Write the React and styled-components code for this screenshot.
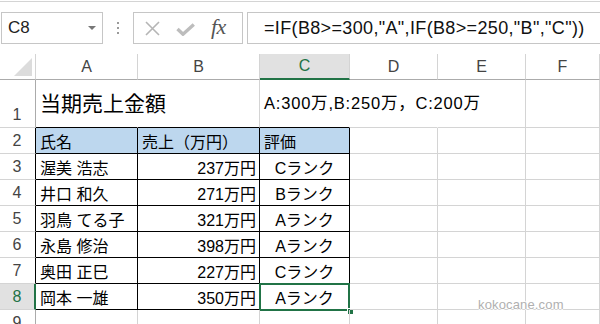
import React from 'react'
import styled, { createGlobalStyle } from 'styled-components'

const c = {
    grid: '#d4d4d4',
    head: '#ababab',
    green: '#217346',
    sel: '#e1e1e1',
    blue: '#bdd7ee',
    box: '#c6c6c6',
    label: '#444444',
}

const GlobalStyle = createGlobalStyle`
    html, body {
        margin: 0;
        padding: 0;
        background: #fff;
        overflow: hidden;
    }
    body {
        width: 600px;
        height: 324px;
        font-family: "Liberation Sans", "Noto Sans CJK JP", sans-serif;
        color: #000;
    }
`

const Page = styled.div`
    position: relative;
    width: 600px;
    height: 324px;
    overflow: hidden;
`

/* ---------- formula bar ---------- */

const FormulaBar = styled.div`
    display: flex;
    align-items: flex-start;
    box-sizing: border-box;
    height: 53px;
    margin-top: 1px;
    padding-top: 10px;
    border-top: 1px solid ${c.grid};
`

const NameBox = styled.div`
    display: flex;
    align-items: center;
    justify-content: space-between;
    box-sizing: border-box;
    width: 102px;
    height: 32px;
    margin-left: 1px;
    padding: 0 6px 0 6px;
    border: 1px solid ${c.box};
    font-size: 17px;
    color: #222;
`

const Caret = styled.span`
    width: 0;
    height: 0;
    border-left: 4px solid transparent;
    border-right: 4px solid transparent;
    border-top: 4px solid #777;
`

const Grip = styled.div`
    display: flex;
    flex-direction: column;
    align-items: center;
    justify-content: center;
    gap: 3px;
    width: 30px;
    height: 32px;

    span {
        width: 2px;
        height: 2px;
        background: #9a9a9a;
    }
`

const ButtonBox = styled.div`
    display: flex;
    align-items: center;
    gap: 16px;
    box-sizing: border-box;
    width: 110px;
    height: 32px;
    padding-left: 11px;
    border: 1px solid ${c.box};
`

const Fx = styled.span`
    font-family: "Liberation Serif", "DejaVu Serif", serif;
    font-style: italic;
    font-size: 22px;
    color: #555;
    letter-spacing: -0.5px;
    line-height: 1;
    margin-top: -2px;
`

const FormulaInput = styled.div`
    flex: 1;
    display: flex;
    align-items: center;
    box-sizing: border-box;
    height: 32px;
    margin-left: 4px;
    margin-right: -4px;
    padding-left: 16px;
    border: 1px solid ${c.box};
    font-size: 18px;
    letter-spacing: 0.35px;
    color: #111;
    white-space: nowrap;
`

/* ---------- sheet ---------- */

const Sheet = styled.div`
    display: grid;
    grid-template-columns: 36px 102px 122px 90px 88px 88px 1fr;
    grid-template-rows: 26px 48px repeat(8, 26px);
`

const Corner = styled.div`
    position: relative;
    box-sizing: border-box;
    border-right: 1px solid ${c.grid};
    border-bottom: 1px solid ${c.head};

    &::after {
        content: '';
        position: absolute;
        left: 14px;
        top: 4px;
        width: 18px;
        height: 18px;
        background: #dcdcdc;
        clip-path: polygon(100% 0, 100% 100%, 0 100%);
    }
`

const ColHead = styled.div`
    display: flex;
    align-items: center;
    justify-content: center;
    box-sizing: border-box;
    border-right: 1px solid ${c.grid};
    border-bottom: ${p => p.$active ? `2px solid ${c.green}` : `1px solid ${c.head}`};
    background: ${p => p.$active ? c.sel : '#fff'};
    color: ${p => p.$active ? c.green : c.label};
    font-size: 16px;
`

const RowHead = styled.div`
    display: flex;
    align-items: flex-end;
    justify-content: center;
    box-sizing: border-box;
    padding-right: ${p => p.$active ? 0 : 1}px;
    border-right: ${p => p.$active ? `2px solid ${c.green}` : `1px solid ${p.$edge || c.head}`};
    border-bottom: 1px solid ${c.grid};
    background: ${p => p.$active ? c.sel : '#fff'};
    color: ${p => p.$active ? c.green : c.label};
    font-size: 16px;
    line-height: 25px;
`

const Cell = styled.div`
    position: relative;
    display: flex;
    align-items: center;
    justify-content: ${p => p.$align === 'right' ? 'flex-end' : p.$align === 'center' ? 'center' : 'flex-start'};
    box-sizing: border-box;
    padding: 0 ${p => p.$align === 'right' ? 3 : 4}px 0 4px;
    border-right: 1px solid ${p => p.$rb || c.grid};
    border-bottom: 1px solid ${p => p.$bb || c.grid};
    background: ${p => p.$fill || 'transparent'};
    font-size: ${p => p.$size || 16}px;
    white-space: nowrap;
`

const Title = styled.span`
    margin-top: -4px;
    font-size: 21px;
`

const Note = styled.span`
    margin-top: -4px;
    font-size: 16.5px;
    letter-spacing: 0.8px;
`

const ActiveFrame = styled.span`
    position: absolute;
    top: -1px;
    left: -1px;
    right: -1px;
    bottom: -2px;
    border: 2px solid ${c.green};
    pointer-events: none;
`

const FillHandle = styled.span`
    position: absolute;
    right: -4px;
    bottom: -5px;
    width: 5px;
    height: 5px;
    background: ${c.green};
    border: 1px solid #fff;
    border-width: 1px 0 0 1px;
`

const Watermark = styled.div`
    position: absolute;
    left: 478px;
    top: 297px;
    font-family: "Liberation Sans", sans-serif;
    font-size: 13px;
    letter-spacing: 0.15px;
    color: #b0b0b0;
    text-shadow: 1px 0 0 #fff, -1px 0 0 #fff, 0 1px 0 #fff, 0 -1px 0 #fff;
`

const columns = ['A', 'B', 'C', 'D', 'E', 'F']

const people = [
    ['渥美 浩志', '237万円', 'Cランク'],
    ['井口 和久', '271万円', 'Bランク'],
    ['羽鳥 てる子', '321万円', 'Aランク'],
    ['永島 修治', '398万円', 'Aランク'],
    ['奥田 正巳', '227万円', 'Cランク'],
    ['岡本 一雄', '350万円', 'Aランク'],
]

const BLACK = '#000'

function CrossIcon() {
    return (
        <svg width="15" height="15" viewBox="0 0 15 15">
            <path d="M1 1 L14 14 M14 1 L1 14" stroke="#b5b5b5" strokeWidth="1.6" fill="none" />
        </svg>
    )
}

function CheckIcon() {
    return (
        <svg width="19" height="13" viewBox="0 0 19 13" style={{ marginTop: 3 }}>
            <path d="M1.5 6 L7 11.2 L17.8 1.5" stroke="#bdbdbd" strokeWidth="3.4" fill="none" />
        </svg>
    )
}

function EmptyCells({ row }) {
    return ['D', 'E', 'F'].map(col => <Cell key={col + row} />)
}

function App() {
    return (
        <Page>
            <GlobalStyle />
            <FormulaBar>
                <NameBox>
                    C8
                    <Caret />
                </NameBox>
                <Grip>
                    <span /><span /><span />
                </Grip>
                <ButtonBox>
                    <CrossIcon />
                    <CheckIcon />
                    <Fx>fx</Fx>
                </ButtonBox>
                <FormulaInput>=IF(B8&gt;=300,"A",IF(B8&gt;=250,"B","C"))</FormulaInput>
            </FormulaBar>

            <Sheet>
                <Corner />
                {columns.map(col => (
                    <ColHead key={col} $active={col === 'C'}>{col}</ColHead>
                ))}

                <RowHead $edge={c.head}>1</RowHead>
                <Cell $rb="transparent" $bb={BLACK}><Title>当期売上金額</Title></Cell>
                <Cell $bb={BLACK} />
                <Cell $rb="transparent" $bb={BLACK}><Note>A:300万,B:250万，C:200万</Note></Cell>
                <Cell $rb="transparent" />
                <Cell />
                <Cell />

                <RowHead $edge={BLACK}>2</RowHead>
                <Cell $fill={c.blue} $rb={BLACK} $bb={BLACK}>氏名</Cell>
                <Cell $fill={c.blue} $rb={BLACK} $bb={BLACK}>売上（万円）</Cell>
                <Cell $fill={c.blue} $rb={BLACK} $bb={BLACK}>評価</Cell>
                <EmptyCells row={2} />

                {people.map(([name, sales, rank], i) => {
                    const rowNo = i + 3
                    const active = rowNo === 8
                    return (
                        <React.Fragment key={name}>
                            <RowHead $edge={BLACK} $active={active}>{rowNo}</RowHead>
                            <Cell $rb={BLACK} $bb={BLACK}>{name}</Cell>
                            <Cell $align="right" $rb={BLACK} $bb={BLACK}>{sales}</Cell>
                            <Cell $align="center" $rb={BLACK} $bb={BLACK}>
                                {rank}
                                {active && <ActiveFrame />}
                                {active && <FillHandle />}
                            </Cell>
                            <EmptyCells row={rowNo} />
                        </React.Fragment>
                    )
                })}

                <RowHead>9</RowHead>
                <Cell />
                <Cell />
                <Cell />
                <EmptyCells row={9} />
            </Sheet>

            <Watermark>kokocane.com</Watermark>
        </Page>
    )
}

export default App
